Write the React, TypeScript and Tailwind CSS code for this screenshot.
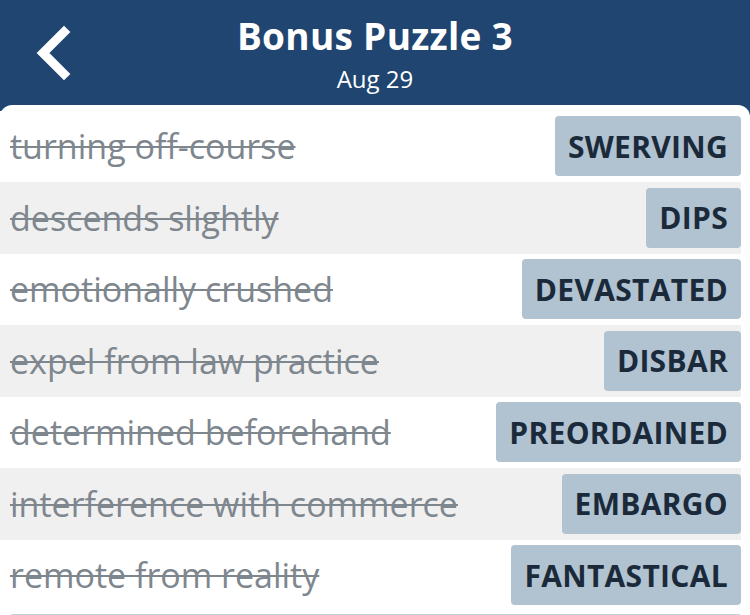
import React from 'react'

const clues = [
  { clue: 'turning off-course', answer: 'SWERVING' },
  { clue: 'descends slightly', answer: 'DIPS' },
  { clue: 'emotionally crushed', answer: 'DEVASTATED' },
  { clue: 'expel from law practice', answer: 'DISBAR' },
  { clue: 'determined beforehand', answer: 'PREORDAINED' },
  { clue: 'interference with commerce', answer: 'EMBARGO' },
  { clue: 'remote from reality', answer: 'FANTASTICAL' },
]

const font = { fontFamily: '"Open Sans", "Noto Sans", sans-serif' }

export default function App() {
  return (
    <div className="h-[615px] w-[750px] overflow-hidden bg-[#1f4570]" style={font}>
      {/* Header */}
      <header className="relative flex h-[105px] flex-col items-center text-white">
        <button className="absolute left-[30px] top-[24px] flex h-[58px] w-[44px] items-center justify-center">
          <svg width="40" height="56" viewBox="0 0 40 56">
            <polyline
              points="32,7 11,28 32,49"
              fill="none"
              stroke="white"
              strokeWidth="9"
              strokeLinecap="square"
            />
          </svg>
        </button>
        <h1 className="mt-[11px] text-[37px] font-bold leading-[50px] tracking-[0.3px]">Bonus Puzzle 3</h1>
        <span className="mt-[3px] text-[24px] leading-[30px]">Aug 29</span>
      </header>

      {/* Clue list */}
      <div className="h-[510px] rounded-t-[12px] bg-white pr-[9px] pt-[5.5px]">
        {clues.map((c, i) => (
          <div
            key={c.answer}
            className={
              'flex h-[71.5px] items-center justify-between pl-[10px] ' +
              (i % 2 === 1 ? 'bg-[#f0f0f0]' : 'bg-white')
            }
          >
            <span className="text-[34px] leading-[44px] text-[#7e868e] line-through decoration-[2px]">{c.clue}</span>
            <span className="flex h-[60px] items-center rounded-[4px] bg-[#b1c2d0] px-[13px] text-[30px] font-bold tracking-[0.3px] text-[#1b2a3b]">
              {c.answer}
            </span>
          </div>
        ))}
        <div className="ml-[10px] mt-[2.5px] h-[4px] rounded-t-[3px] bg-[#c3d0da]" />
      </div>
    </div>
  )
}
